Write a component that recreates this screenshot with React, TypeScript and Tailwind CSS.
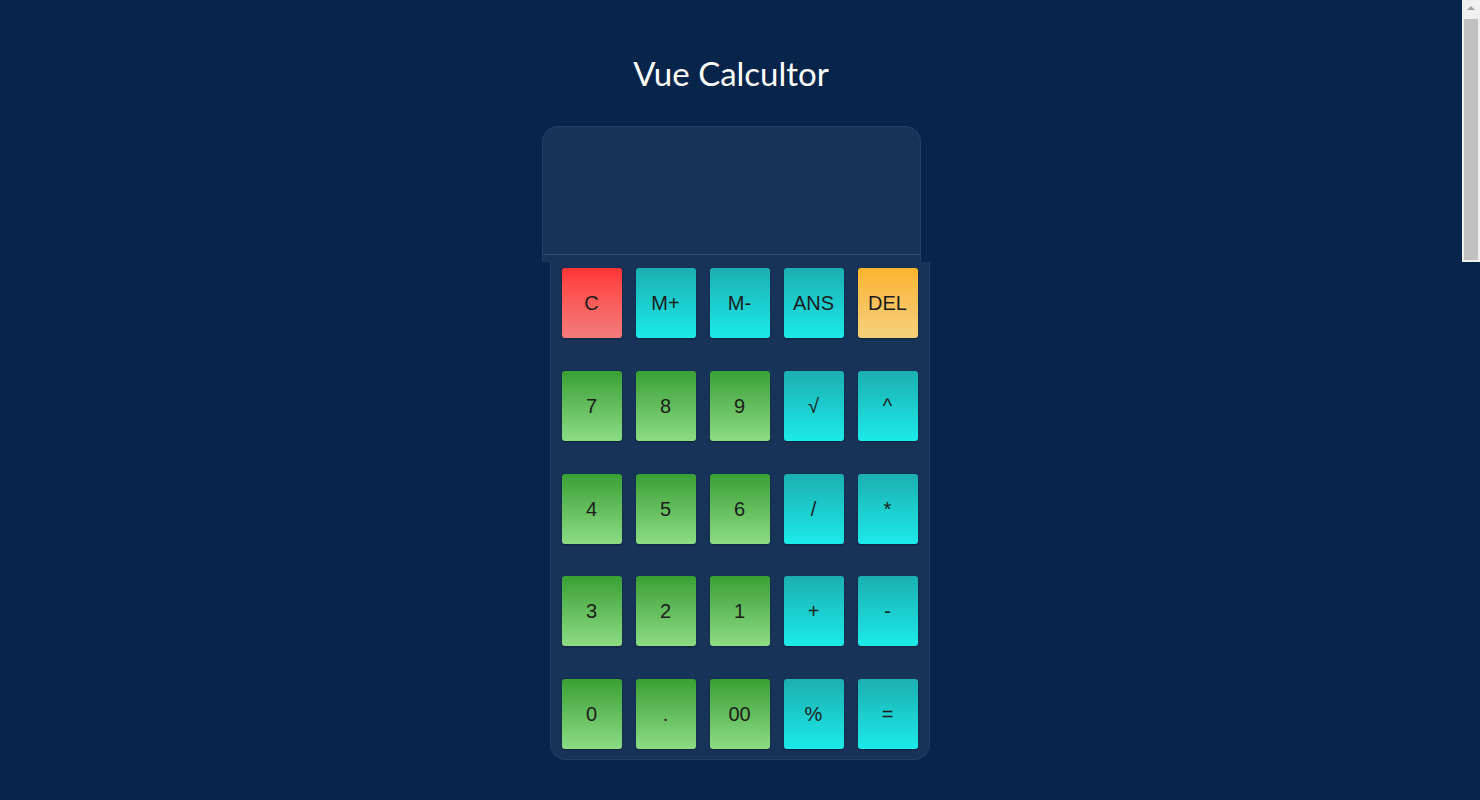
import React from "react";

type Kind = "red" | "cyan" | "green" | "yellow";

const rows: [string, Kind][][] = [
  [["C", "red"], ["M+", "cyan"], ["M-", "cyan"], ["ANS", "cyan"], ["DEL", "yellow"]],
  [["7", "green"], ["8", "green"], ["9", "green"], ["√", "cyan"], ["^", "cyan"]],
  [["4", "green"], ["5", "green"], ["6", "green"], ["/", "cyan"], ["*", "cyan"]],
  [["3", "green"], ["2", "green"], ["1", "green"], ["+", "cyan"], ["-", "cyan"]],
  [["0", "green"], [".", "green"], ["00", "green"], ["%", "cyan"], ["=", "cyan"]],
];

const kindClass: Record<Kind, string> = {
  red: "bg-gradient-to-b from-[#ff3434] to-[#f27a7a]",
  cyan: "bg-gradient-to-b from-[#1cafb0] to-[#1ceaea]",
  green: "bg-gradient-to-b from-[#38a033] to-[#8cdc84]",
  yellow: "bg-gradient-to-b from-[#fcb42c] to-[#f4d07a]",
};

function Key({ label, kind }: { label: string; kind: Kind }) {
  return (
    <button
      className={`w-[60px] h-[70px] rounded-[3px] ${kindClass[kind]} flex items-center justify-center text-[20px] text-[#1c1c1c] shadow-[0_1px_2px_rgba(0,0,0,0.35)]`}
      style={{ fontFamily: '"Liberation Sans", Arial, sans-serif' }}
    >
      {label}
    </button>
  );
}

export default function App() {
  return (
    <div className="w-full h-[800px] bg-[#07244b] flex overflow-hidden">
      <div className="flex-1 flex flex-col items-center">
        <h1
          className="mt-[50px] h-[46px] text-[33px] leading-[46px] text-white"
          style={{ fontFamily: 'Lato, "Open Sans", sans-serif' }}
        >
          Vue Calcultor
        </h1>
        <div className="mt-[30px] w-[379px] flex flex-col">
          <div className="h-[136px] bg-[#173358] rounded-t-[16px] border border-[#22406a] border-b-0 flex flex-col">
            <div className="h-[128px] border-b border-[#2a4a74]" />
          </div>
          <div className="ml-[8px] w-[380px] bg-[#173358] rounded-b-[16px] border border-t-0 border-[#22406a] pl-[11px] pr-[11px] pt-[6px] pb-[10px] flex flex-col gap-[32.75px]">
            {rows.map((row, i) => (
              <div key={i} className="flex gap-[14px]">
                {row.map(([label, kind]) => (
                  <Key key={label} label={label} kind={kind} />
                ))}
              </div>
            ))}
          </div>
        </div>
      </div>
      <div className="w-[18px] h-[262px] bg-[#f0f0f0] flex flex-col items-center pt-[6px]">
        <div className="w-0 h-0 border-l-[4px] border-r-[4px] border-b-[4px] border-l-transparent border-r-transparent border-b-[#a3a3a3]" />
        <div className="mt-[9px] w-[14px] flex-1 bg-[#c1c1c1] mb-[2px]" />
      </div>
    </div>
  );
}
